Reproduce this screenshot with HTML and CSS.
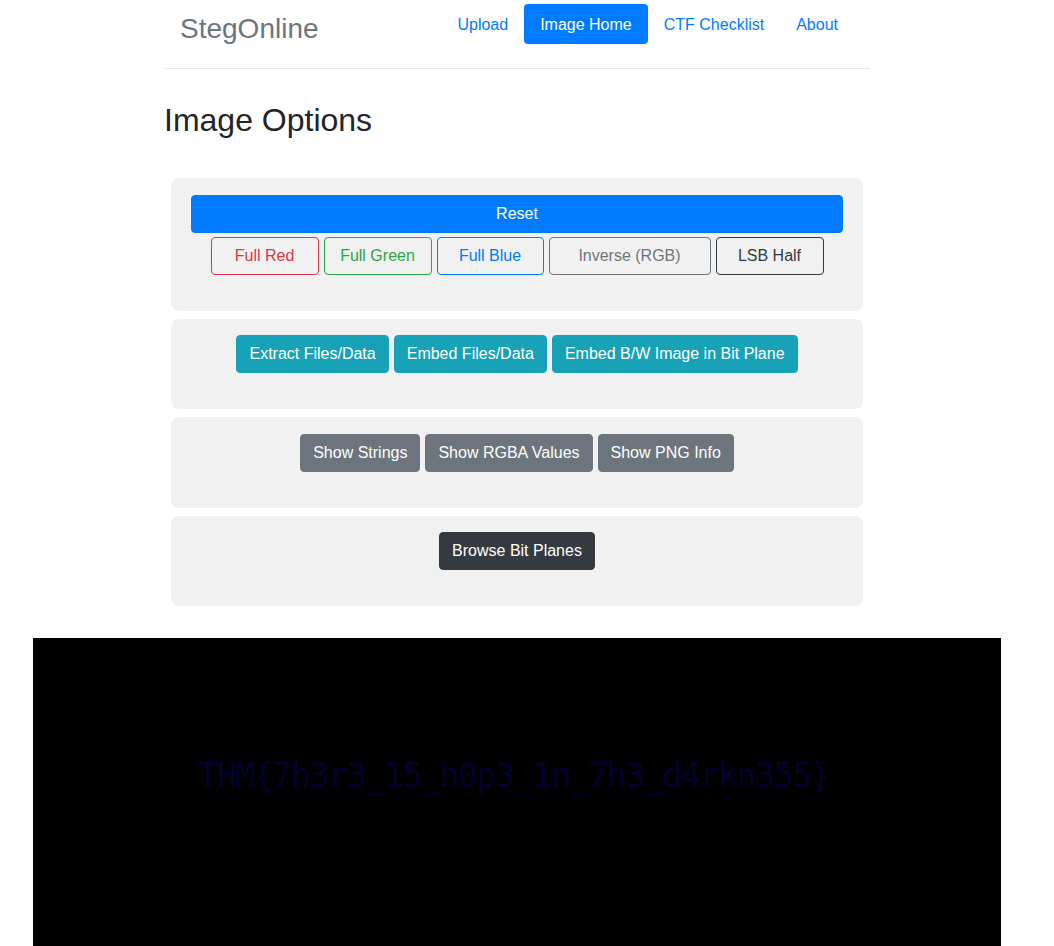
FILE: index.html
```html
<!DOCTYPE html>
<html lang="en">
<head>
<meta charset="utf-8">
<title>StegOnline</title>
<link rel="stylesheet" href="styles.css">
</head>
<body>
<div class="page">
  <div class="container">
    <header class="header">
      <div class="brand">StegOnline</div>
      <nav class="nav">
        <a class="nav-link">Upload</a>
        <a class="nav-link active">Image Home</a>
        <a class="nav-link">CTF Checklist</a>
        <a class="nav-link">About</a>
      </nav>
    </header>
    <hr class="rule">
    <h2 class="title">Image Options</h2>

    <section class="panel">
      <button class="btn btn-primary btn-block">Reset</button>
      <div class="row">
        <button class="btn btn-outline red w108">Full Red</button>
        <button class="btn btn-outline green w108">Full Green</button>
        <button class="btn btn-outline blue w107">Full Blue</button>
        <button class="btn btn-outline gray w162">Inverse (RGB)</button>
        <button class="btn btn-outline dark w108">LSB Half</button>
      </div>
    </section>

    <section class="panel">
      <div class="row">
        <button class="btn btn-info">Extract Files/Data</button>
        <button class="btn btn-info">Embed Files/Data</button>
        <button class="btn btn-info">Embed B/W Image in Bit Plane</button>
      </div>
    </section>

    <section class="panel">
      <div class="row">
        <button class="btn btn-secondary">Show Strings</button>
        <button class="btn btn-secondary">Show RGBA Values</button>
        <button class="btn btn-secondary">Show PNG Info</button>
      </div>
    </section>

    <section class="panel">
      <div class="row">
        <button class="btn btn-dark">Browse Bit Planes</button>
      </div>
    </section>
  </div>

  <div class="canvas">
    <div class="flag">THM{7h3r3_15_h0p3_1n_7h3_d4rkn355}</div>
  </div>
</div>
</body>
</html>
```

FILE: styles.css
```css
* { box-sizing: border-box; }

html, body {
  margin: 0;
  padding: 0;
  background: #fff;
  overflow: hidden;
}

body {
  font-family: "Liberation Sans", Arial, sans-serif;
  font-size: 16px;
  color: #212529;
}

.page {
  width: 1034px;
}

.container {
  width: 706px;
  margin: 0 auto;
}

.header {
  display: flex;
  justify-content: space-between;
  align-items: flex-start;
  height: 44px;
  padding: 4px 16px 0 16px;
}

.brand {
  font-size: 28px;
  line-height: 32px;
  margin-top: 9px;
  color: #6c757d;
}

.nav {
  display: flex;
}

.nav-link {
  display: block;
  padding: 9px 16px 7px 16px;
  line-height: 24px;
  color: #007bff;
  border-radius: 4px;
  text-decoration: none;
}

.nav-link.active {
  background: #007bff;
  color: #fff;
}

.rule {
  margin: 24px 0 0 0;
  border: 0;
  border-top: 1px solid #e5e5e5;
  height: 0;
}

.title {
  margin: 32px 0 39px 0;
  font-size: 32px;
  font-weight: 400;
  line-height: 38px;
  color: #212529;
}

.panel {
  margin: 0 7px 8px 7px;
  padding: 16.5px 20px 36px 20px;
  background: #f1f1f1;
  border-radius: 8px;
}

.row {
  display: flex;
  justify-content: center;
  gap: 5px;
}

.btn-block + .row {
  margin-top: 4px;
}

.btn {
  display: inline-block;
  font-family: "Liberation Sans", Arial, sans-serif;
  font-size: 16px;
  line-height: 24px;
  padding: 6px 12px;
  border: 1px solid transparent;
  border-radius: 4px;
  background: transparent;
  text-align: center;
  white-space: nowrap;
}

.btn-block {
  display: block;
  width: 100%;
}

.btn-primary {
  background: #007bff;
  border-color: #007bff;
  color: #fff;
}

.btn-info {
  background: #17a2b8;
  border-color: #17a2b8;
  color: #fff;
}

.btn-secondary {
  background: #6c757d;
  border-color: #6c757d;
  color: #fff;
}

.btn-dark {
  background: #343a40;
  border-color: #343a40;
  color: #fff;
}

.btn-outline.red { color: #dc3545; border-color: #dc3545; }
.btn-outline.green { color: #28a745; border-color: #28a745; }
.btn-outline.blue { color: #007bff; border-color: #007bff; }
.btn-outline.gray { color: #6c757d; border-color: #6c757d; }
.btn-outline.dark { color: #343a40; border-color: #343a40; }

.w107 { width: 107px; }
.w108 { width: 108px; }
.w162 { width: 162px; }

.canvas {
  width: 968px;
  height: 308px;
  margin: 32px auto 0 auto;
  background: #000;
  padding-top: 119px;
}

.flag {
  text-align: center;
  font-family: "DejaVu Sans Mono", monospace;
  font-size: 33px;
  letter-spacing: -1.3px;
  line-height: 38px;
  color: #02022e;
  margin-left: -6px;
}
```
